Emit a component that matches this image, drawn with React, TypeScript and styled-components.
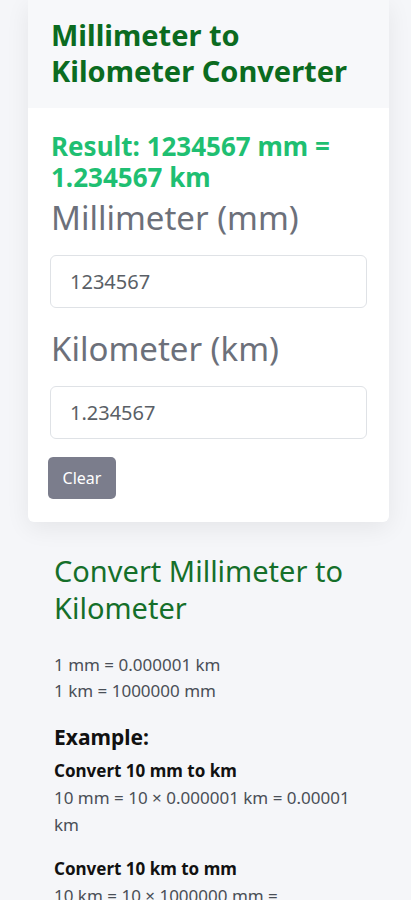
import React from "react";
import styled, { createGlobalStyle } from "styled-components";

const Global = createGlobalStyle`
  html, body { margin: 0; padding: 0; background: #f5f6f9; }
  body { font-family: "Noto Sans", "Open Sans", sans-serif; }
  * { box-sizing: border-box; }
`;

const Page = styled.div`
  width: 411px;
  min-height: 900px;
  padding: 0 22px 0 28px;
  background: #f5f6f9;
  overflow: hidden;
`;

const Card = styled.div`
  width: 361px;
  background: #fff;
  border-radius: 0 0 6px 6px;
  box-shadow: 0 6px 24px rgba(0, 0, 0, 0.07);
  overflow: hidden;
`;

const CardHeader = styled.div`
  background: #f7f8fa;
  padding: 17px 20px 19px 23px;
`;

const Title = styled.h1`
  margin: 0;
  font-size: 29px;
  line-height: 36px;
  font-weight: 700;
  color: #0b6b20;
`;

const CardBody = styled.div`
  padding: 23px 21px 23px 20px;
`;

const Result = styled.div`
  font-size: 26px;
  line-height: 31px;
  font-weight: 700;
  color: #1fbf72;
  padding-left: 3px;
`;

const Label = styled.label<{ $first?: boolean }>`
  display: block;
  font-size: 33px;
  line-height: 40px;
  color: #6c707a;
  padding-left: 3px;
  margin-top: ${(p) => (p.$first ? "5px" : "21px")};
  margin-bottom: 17px;
`;

const Input = styled.input`
  display: block;
  width: 317px;
  height: 53px;
  margin-left: 2px;
  padding: 0 19px;
  border: 1px solid #dfe2e6;
  border-radius: 6px;
  font-family: inherit;
  font-size: 20px;
  color: #5a5f66;
  background: #fff;
  outline: none;
`;

const Button = styled.button`
  display: block;
  margin-top: 18px;
  width: 68px;
  height: 42px;
  border: none;
  border-radius: 5px;
  background: #7b7d8c;
  color: #fff;
  font-family: inherit;
  font-size: 16px;
  padding: 0;
`;

const Info = styled.section`
  padding: 30px 0 0 26px;
  color: #4a4f57;
`;

const InfoTitle = styled.h2`
  margin: 0 0 26px;
  font-size: 29px;
  line-height: 37px;
  font-weight: 400;
  color: #156f2a;
`;

const Line = styled.p`
  margin: 0;
  font-size: 17px;
  line-height: 26px;
  color: #4a4f57;
`;

const Example = styled.h3`
  margin: 19px 0 7px;
  font-size: 21px;
  line-height: 28px;
  font-weight: 700;
  color: #111;
`;

const Sub = styled.h4<{ $top?: number }>`
  margin: ${(p) => p.$top ?? 0}px 0 0;
  font-size: 17px;
  line-height: 26px;
  font-weight: 700;
  color: #111;
`;

const Calc = styled.p`
  margin: 0;
  font-size: 17px;
  line-height: 27px;
  color: #4a4f57;
  width: 303px;
`;

export default function App() {
  return (
    <>
      <Global />
      <Page>
        <Card>
          <CardHeader>
            <Title>Millimeter to Kilometer Converter</Title>
          </CardHeader>
          <CardBody>
            <Result>Result: 1234567 mm = 1.234567 km</Result>
            <Label $first>Millimeter (mm)</Label>
            <Input defaultValue="1234567" />
            <Label>Kilometer (km)</Label>
            <Input defaultValue="1.234567" />
            <Button>Clear</Button>
          </CardBody>
        </Card>
        <Info>
          <InfoTitle>Convert Millimeter to Kilometer</InfoTitle>
          <Line>1 mm = 0.000001 km</Line>
          <Line>1 km = 1000000 mm</Line>
          <Example>Example:</Example>
          <Sub>Convert 10 mm to km</Sub>
          <Calc>10 mm = 10 × 0.000001 km = 0.00001 km</Calc>
          <Sub $top={18}>Convert 10 km to mm</Sub>
          <Calc>10 km = 10 × 1000000 mm = 10000000 mm</Calc>
        </Info>
      </Page>
    </>
  );
}
